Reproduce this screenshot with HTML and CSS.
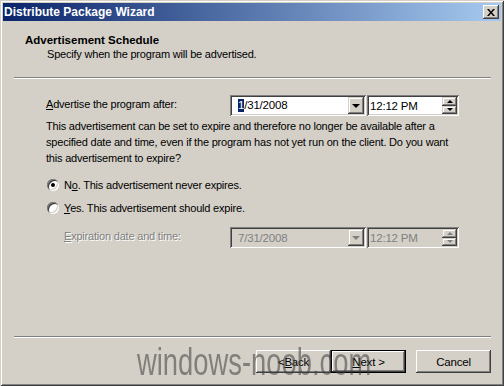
FILE: index.html
```html
<!DOCTYPE html>
<html>
<head>
<meta charset="utf-8">
<link rel="stylesheet" href="styles.css">
</head>
<body>
<div class="window">
  <div class="titlebar">
    <span class="title">Distribute Package Wizard</span>
    <div class="close">
      <svg width="8" height="7" viewBox="0 0 8 7"><path d="M0 0h2l2 2.5L6 0h2L5 3.5 8 7H6L4 4.5 2 7H0l3-3.5z" fill="#000"/></svg>
    </div>
  </div>
  <div class="header">
    <div class="h-title">Advertisement Schedule</div>
    <div class="h-sub">Specify when the program will be advertised.</div>
  </div>
  <div class="sep"></div>
  <div class="content">
    <div class="row row-first">
      <div class="label"><u>A</u>dvertise the program after:</div>
      <div class="pickers">
        <div class="field date">
          <span class="ftext"><span class="sel">1</span>/31/2008</span>
          <div class="dropbtn"><span class="arrow-down"></span></div>
        </div>
        <div class="field time">
          <span class="ftext">12:12 PM</span>
          <div class="spin">
            <div class="spinbtn"><span class="arrow-up-s"></span></div>
            <div class="spinbtn"><span class="arrow-down-s"></span></div>
          </div>
        </div>
      </div>
    </div>
    <p class="desc">This advertisement can be set to expire and therefore no longer be available after a<br>specified date and time, even if the program has not yet run on the client. Do you want<br>this advertisement to expire?</p>
    <div class="radio radio-no">
      <span class="rb"><span class="dot"></span></span>
      <span>N<u>o</u>. This advertisement never expires.</span>
    </div>
    <div class="radio radio-yes">
      <span class="rb"></span>
      <span><u>Y</u>es. This advertisement should expire.</span>
    </div>
    <div class="row row-exp">
      <div class="label disabled-label"><u>E</u>xpiration date and time:</div>
      <div class="pickers">
        <div class="field date disabled">
          <span class="ftext">7/31/2008</span>
          <div class="dropbtn"><span class="arrow-down dis"></span></div>
        </div>
        <div class="field time disabled">
          <span class="ftext">12:12 PM</span>
          <div class="spin">
            <div class="spinbtn"><span class="arrow-up-s dis"></span></div>
            <div class="spinbtn"><span class="arrow-down-s dis"></span></div>
          </div>
        </div>
      </div>
    </div>
  </div>
  <div class="sep"></div>
  <div class="buttons">
    <div class="btn">&lt; <u>B</u>ack</div>
    <div class="btn default"><u>N</u>ext &gt;</div>
    <div class="btn cancel">Cancel</div>
  </div>
  <div class="watermark">windows-noob.com</div>
</div>
</body>
</html>
```
FILE: styles.css
```css
* { box-sizing: border-box; }
html, body { margin: 0; padding: 0; }
body {
  width: 504px;
  height: 386px;
  overflow: hidden;
  background: #d4d0c8;
  font-family: "Liberation Sans", Arial, sans-serif;
  font-size: 11px;
  letter-spacing: -0.2px;
  color: #000;
}
.window {
  position: relative;
  width: 504px;
  height: 386px;
  background: #d4d0c8;
  padding: 3px;
  display: flex;
  flex-direction: column;
  box-shadow: inset 1px 1px #d4d0c8, inset -1px -1px #404040, inset 2px 2px #fff, inset -2px -2px #808080;
}
.titlebar {
  height: 18px;
  flex: none;
  background: linear-gradient(to right, #0a246a, #a6caf0);
  display: flex;
  align-items: center;
  justify-content: space-between;
  padding: 0 2px 0 1px;
}
.title {
  color: #fff;
  font-weight: bold;
  font-size: 12px;
  letter-spacing: 0;
  line-height: 18px;
}
.close {
  width: 16px;
  height: 14px;
  background: #d4d0c8;
  box-shadow: inset -1px -1px #404040, inset 1px 1px #fff, inset -2px -2px #808080;
  display: flex;
  align-items: center;
  justify-content: center;
  padding-right: 1px;
}
.close svg { display: block; }
.header {
  flex: none;
  padding: 13px 0 16px 22px;
  line-height: 13px;
}
.h-title {
  font-weight: bold;
  font-size: 11.5px;
  letter-spacing: 0;
}
.h-sub {
  margin-top: 1px;
  padding-left: 22px;
}
.sep {
  flex: none;
  height: 2px;
  margin: 0 10px 0 11px;
  border-top: 1px solid #808080;
  border-bottom: 1px solid #fff;
}
.content {
  flex: 1;
  padding-left: 43px;
}
.row {
  display: grid;
  grid-template-columns: 184px auto;
  align-items: center;
  height: 21px;
}
.row-first { margin-top: 16px; }
.row-exp { margin-top: 11px; }
.label { line-height: 13px; padding-bottom: 2px; }
.disabled-label {
  padding-left: 18px;
  color: #808080;
  text-shadow: 1px 1px #fff;
}
.pickers {
  display: flex;
  gap: 1px;
}
.field {
  position: relative;
  height: 21px;
  background: #fff;
  box-shadow: inset 1px 1px #808080, inset -1px -1px #fff, inset 2px 2px #404040, inset -2px -2px #d4d0c8;
  display: flex;
  align-items: center;
  justify-content: space-between;
  padding: 2px;
}
.field.disabled { background: #d4d0c8; color: #808080; }
.date { width: 136px; }
.time { width: 92px; }
.date .ftext { padding-left: 6px; font-size: 11.5px; }
.time .ftext { padding-left: 1px; font-size: 11.5px; }
.sel {
  background: #0a246a;
  color: #fff;
  display: inline-block;
  line-height: 13px;
}
.dropbtn {
  width: 16px;
  height: 17px;
  background: #d4d0c8;
  box-shadow: inset -1px -1px #404040, inset 1px 1px #d4d0c8, inset -2px -2px #808080, inset 2px 2px #fff;
  display: flex;
  align-items: center;
  justify-content: center;
}
.arrow-down {
  width: 0; height: 0;
  border-left: 4px solid transparent;
  border-right: 4px solid transparent;
  border-top: 4px solid #000;
  margin-top: 1px;
}
.arrow-down.dis { border-top-color: #808080; }
.spin {
  width: 15px;
  height: 17px;
  display: flex;
  flex-direction: column;
}
.spinbtn {
  flex: 1;
  background: #d4d0c8;
  box-shadow: inset -1px -1px #404040, inset 1px 1px #d4d0c8, inset -2px -2px #808080, inset 2px 2px #fff;
  display: flex;
  align-items: center;
  justify-content: center;
}
.arrow-up-s {
  width: 0; height: 0;
  border-left: 3px solid transparent;
  border-right: 3px solid transparent;
  border-bottom: 3px solid #000;
}
.arrow-down-s {
  width: 0; height: 0;
  border-left: 3px solid transparent;
  border-right: 3px solid transparent;
  border-top: 3px solid #000;
}
.arrow-up-s.dis { border-bottom-color: #808080; }
.arrow-down-s.dis { border-top-color: #808080; }
.desc {
  margin: 2px 0 0 0;
  line-height: 16px;
  white-space: nowrap;
}
.radio {
  display: flex;
  align-items: center;
  height: 16px;
  gap: 4px;
  padding-left: 1px;
}
.radio-no { margin-top: 11px; }
.radio-yes { margin-top: 7px; }
.rb {
  width: 12px;
  height: 12px;
  border-radius: 50%;
  background: #fff;
  box-shadow: inset 1px 1px #808080, inset -1px -1px #fff, inset 2px 2px #404040, inset -2px -2px #d4d0c8;
  display: flex;
  align-items: center;
  justify-content: center;
  margin-right: 1px;
}
.dot {
  width: 4px;
  height: 4px;
  border-radius: 50%;
  background: #000;
}
.buttons {
  flex: none;
  display: flex;
  justify-content: flex-end;
  padding: 12px 10px 10px 0;
}
.btn {
  width: 75px;
  height: 23px;
  display: flex;
  align-items: center;
  justify-content: center;
  background: #d4d0c8;
  box-shadow: inset -1px -1px #404040, inset 1px 1px #fff, inset -2px -2px #808080, inset 2px 2px #d4d0c8;
  font-size: 11.5px;
}
.btn.default {
  border: 1px solid #000;
  box-shadow: inset -1px -1px #404040, inset 1px 1px #fff, inset -2px -2px #808080;
}
.btn.cancel { margin-left: 10px; }
.watermark {
  position: absolute;
  left: 137px;
  top: 338px;
  font-size: 38px;
  letter-spacing: 0;
  line-height: 48px;
  color: rgba(60, 60, 60, 0.55);
  transform: scaleX(0.72);
  transform-origin: left top;
  white-space: nowrap;
  pointer-events: none;
}
```
